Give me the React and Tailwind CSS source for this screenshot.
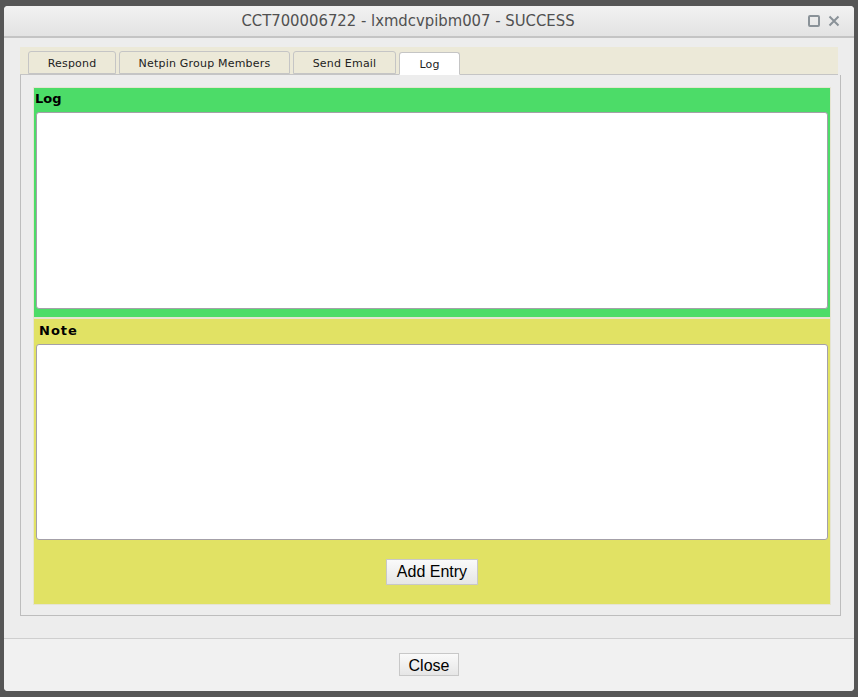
import React from 'react';

const tabs = ['Respond', 'Netpin Group Members', 'Send Email', 'Log'];

function Tab({ label, active, width }) {
  return (
    <div
      className={`h-[23px] ${width} flex items-center justify-center pt-[4px] rounded-t-[3px] border border-[#c5c5c5] text-[11px] tracking-[0.2px] text-[#222] ${
        active ? 'bg-white border-b-white relative top-[1px]' : 'bg-[#ece9d8]'
      }`}
    >
      {label}
    </div>
  );
}

export default function App() {
  const widths = ['w-[88px]', 'w-[171px]', 'w-[103px]', 'w-[61px]'];

  return (
    <div
      className="w-[858px] h-[697px] bg-[#565656] pt-[6px] pl-[4px]"
      style={{ fontFamily: '"DejaVu Sans", sans-serif' }}
    >
      <div className="w-[850px] h-[685px] bg-[#ededed] rounded-[4px] flex flex-col overflow-hidden">
        {/* title bar */}
        <div className="h-[32px] shrink-0 flex items-center relative bg-gradient-to-b from-[#f2f2f2] to-[#e3e3e3] border-b-2 border-[#c4c4c4] pr-[42px]">
          <div
            className="flex-1 text-center text-[16.5px] text-[#505050]"
            style={{ fontFamily: '"DejaVu Sans Condensed", "DejaVu Sans", sans-serif' }}
          >
            CCT700006722 - lxmdcvpibm007 - SUCCESS
          </div>
          <div className="absolute right-[14px] top-[9px] flex items-center gap-[8px]">
            <div className="w-[12px] h-[12px] border-2 border-[#8a9298] rounded-[2px]" />
            <svg width="12" height="12" viewBox="0 0 12 12">
              <path d="M1.5 1.5 L10.5 10.5 M10.5 1.5 L1.5 10.5" stroke="#8a9298" strokeWidth="2" />
            </svg>
          </div>
        </div>

        {/* body */}
        <div className="flex-1 pt-[9px] px-[16px]">
          <div className="w-[818px] h-[28px] bg-[#ece9d8] flex items-end gap-[3px] pl-[8px] border-b border-[#c5c5c5]">
            {tabs.map((t, i) => (
              <Tab key={t} label={t} active={i === 3} width={widths[i]} />
            ))}
          </div>
          <div className="w-[821px] h-[541px] border border-t-0 border-[#bdbdbd] pt-[12px] pl-[12px]">
            <div className="w-[798px] border border-[#e6e4d2] bg-[#4cdc68] flex flex-col">
              <div className="h-[24px] pl-[1px] pt-[1px] text-[13px] font-bold text-black">Log</div>
              <div className="mx-[2px] h-[197px] bg-white border border-[#a4a0a8] rounded-[3px]" />
              <div className="h-[8px]" />
            </div>
            <div className="w-[798px] border border-[#e6e4d2] bg-[#e1e264] flex flex-col">
              <div className="h-[25px] pl-[5px] pt-[2px] text-[13px] font-bold text-black tracking-[1px]">Note</div>
              <div className="mx-[2px] h-[196px] bg-white border border-[#a4a0a8] rounded-[3px]" />
              <div className="h-[64px] flex items-center justify-center">
                <button
                  className="h-[26px] px-[10px] bg-gradient-to-b from-[#fafafa] to-[#e6e6e6] border border-[#c8c8c8] text-[16px] text-black"
                  style={{ fontFamily: '"Liberation Sans", Arial, sans-serif' }}
                >
                  Add Entry
                </button>
              </div>
            </div>
          </div>
        </div>

        {/* footer */}
        <div className="h-[53px] shrink-0 border-t border-[#cfcfcf] bg-[#f1f1f1] flex items-center justify-center pb-[2px]">
          <button
            className="h-[23px] px-[9px] bg-gradient-to-b from-[#fafafa] to-[#e6e6e6] border border-[#c8c8c8] text-[16px] text-black"
            style={{ fontFamily: '"Liberation Sans", Arial, sans-serif' }}
          >
            Close
          </button>
        </div>
      </div>
    </div>
  );
}
